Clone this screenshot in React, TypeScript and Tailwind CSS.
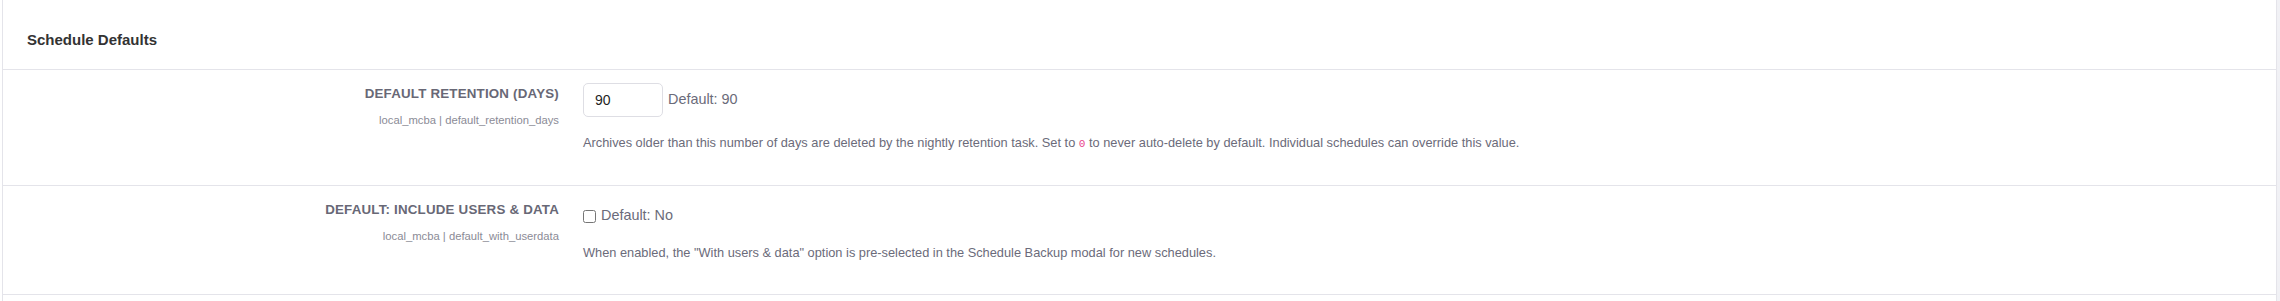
import React, { useState } from 'react';

const font = { fontFamily: '"Liberation Sans", Arial, sans-serif' };

type RowProps = {
  label: string;
  setting: string;
  children: React.ReactNode;
};

const SettingRow: React.FC<RowProps> = ({ label, setting, children }) => (
  <div className="flex border-b border-[#e4e4ea]">
    <div className="w-[570px] shrink-0 pr-[14px] pt-[14px] text-right">
      <div className="text-[13.33px] leading-[20px] font-bold uppercase tracking-[0.2px] text-[#686876]">{label}</div>
      <div className="mt-[8px] text-[11.25px] leading-[16px] text-[#8b8b96]">{setting}</div>
    </div>
    <div className="flex-1 pl-[10px]">{children}</div>
  </div>
);

const App: React.FC = () => {
  const [days, setDays] = useState('90');
  const [withData, setWithData] = useState(false);

  return (
    <div className="min-h-screen bg-white pl-[2px] pr-[3px]" style={font}>
      <div className="border-l border-r border-[#e4e4ea] bg-white shadow-[3px_0_0_#f1f1f5] min-h-[301px]">
        <div className="h-[70px] border-b border-[#e4e4ea] pl-[24px] pt-[30px]">
          <h3 className="text-[15px] leading-[20px] font-bold text-[#333333]">Schedule Defaults</h3>
        </div>

        <SettingRow label="Default retention (days)" setting="local_mcba | default_retention_days">
          <div className="pt-[13px] pb-[33px]">
            <div className="flex items-center h-[34px]">
              <input
                type="text"
                value={days}
                onChange={(e) => setDays(e.target.value)}
                className="w-[80px] h-[34px] rounded-[5px] border border-[#dedee4] px-[11px] text-[14px] font-normal text-[#1f1f24] outline-none"
              />
              <span className="ml-[5px] text-[14.4px] text-[#6b6b7a]">Default: 90</span>
            </div>
            <p className="mt-[17px] h-[18px] text-[12.8px] leading-[18px] text-[#6b6b7a]">
              Archives older than this number of days are deleted by the nightly retention task. Set to{' '}
              <code className="text-[11px] leading-none text-[#e83e8c]" style={{ fontFamily: '"Liberation Mono", monospace' }}>0</code>{' '}
              to never auto-delete by default. Individual schedules can override this value.
            </p>
          </div>
        </SettingRow>

        <SettingRow label="Default: include users & data" setting="local_mcba | default_with_userdata">
          <div className="pt-[15px] pb-[32px]">
            <label className="flex items-center h-[30px]">
              <input
                type="checkbox"
                checked={withData}
                onChange={(e) => setWithData(e.target.checked)}
                className="w-[13px] h-[13px] m-0 mr-[5px]"
              />
              <span className="text-[14.4px] text-[#6b6b7a]">Default: No</span>
            </label>
            <p className="mt-[13px] text-[12.8px] leading-[18px] text-[#6b6b7a]">
              When enabled, the "With users &amp; data" option is pre-selected in the Schedule Backup modal for new schedules.
            </p>
          </div>
        </SettingRow>
      </div>
    </div>
  );
};

export default App;
